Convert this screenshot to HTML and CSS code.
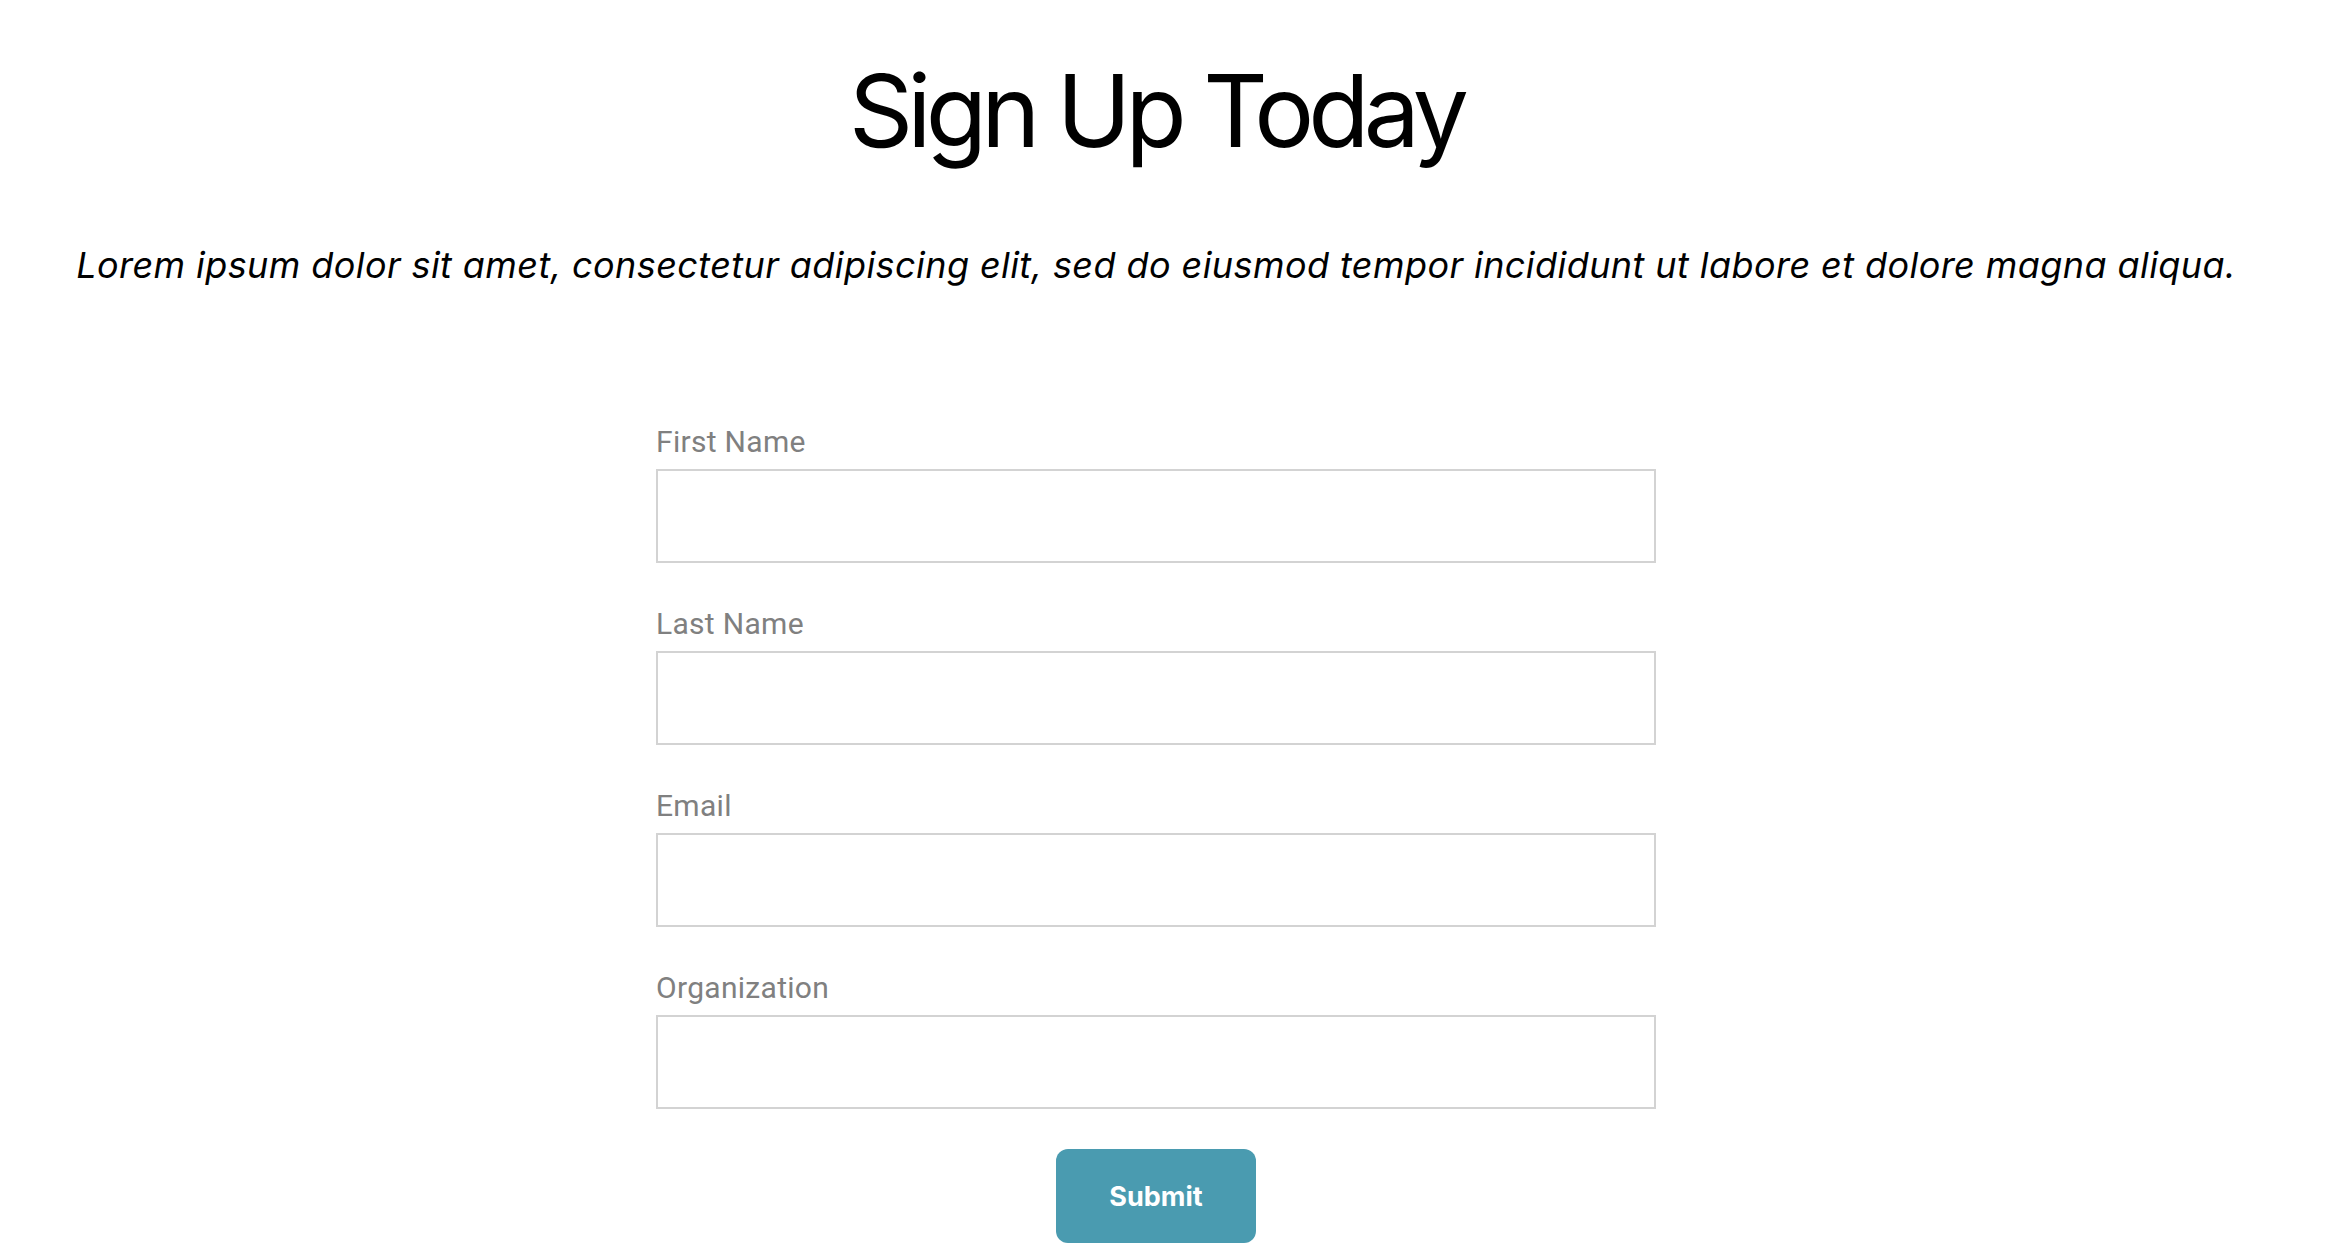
FILE: index.html
```html
<!DOCTYPE html>
<html lang="en">
<head>
<meta charset="utf-8">
<title>Sign Up Today</title>
<link rel="stylesheet" href="styles.css">
</head>
<body>
<main class="page">
  <h1 class="title">Sign Up Today</h1>
  <p class="lead">Lorem ipsum dolor sit amet, consectetur adipiscing elit, sed do eiusmod tempor incididunt ut labore et dolore magna aliqua.</p>
  <form class="form">
    <div class="field">
      <label class="label" for="first">First Name</label>
      <input class="input" id="first" type="text">
    </div>
    <div class="field">
      <label class="label" for="last">Last Name</label>
      <input class="input" id="last" type="text">
    </div>
    <div class="field">
      <label class="label" for="email">Email</label>
      <input class="input" id="email" type="email">
    </div>
    <div class="field">
      <label class="label" for="org">Organization</label>
      <input class="input" id="org" type="text">
    </div>
    <div class="actions">
      <button class="submit" type="submit">Submit</button>
    </div>
  </form>
</main>
</body>
</html>
```
FILE: styles.css
```css
html, body {
  margin: 0;
  padding: 0;
  background: #ffffff;
}

.page {
  width: 2312px;
  padding-top: 50px;
  text-align: center;
  font-family: "Inter", "Noto Sans", sans-serif;
  color: #000;
}

.title {
  margin: 0;
  font-size: 100px;
  font-weight: 400;
  line-height: 121px;
  letter-spacing: -5.8px;
}

.lead {
  margin: 72px 0 0;
  font-size: 36px;
  font-style: italic;
  line-height: 44px;
  letter-spacing: 0.42px;
  color: #000;
}

.form {
  width: 1000px;
  margin: 138px auto 0;
  display: flex;
  flex-direction: column;
  gap: 44px;
  text-align: left;
}

.field {
  display: flex;
  flex-direction: column;
  gap: 11px;
}

.label {
  font-family: "Roboto", "Noto Sans", sans-serif;
  font-size: 30px;
  line-height: 33px;
  letter-spacing: 0.3px;
  color: #808080;
}

.input {
  box-sizing: border-box;
  width: 1000px;
  height: 94px;
  margin: 0;
  border: 2px solid #d3d3d3;
  border-radius: 0;
  background: #fff;
  font-size: 28px;
  padding: 0 16px;
  outline: none;
}

.actions {
  display: flex;
  justify-content: center;
  margin-top: -4px;
}

.submit {
  width: 200px;
  height: 94px;
  border: none;
  border-radius: 12px;
  background: #4a9bb0;
  color: #fff;
  font-family: "Inter", "Noto Sans", sans-serif;
  font-size: 27px;
  font-weight: 700;
  cursor: pointer;
}
```
